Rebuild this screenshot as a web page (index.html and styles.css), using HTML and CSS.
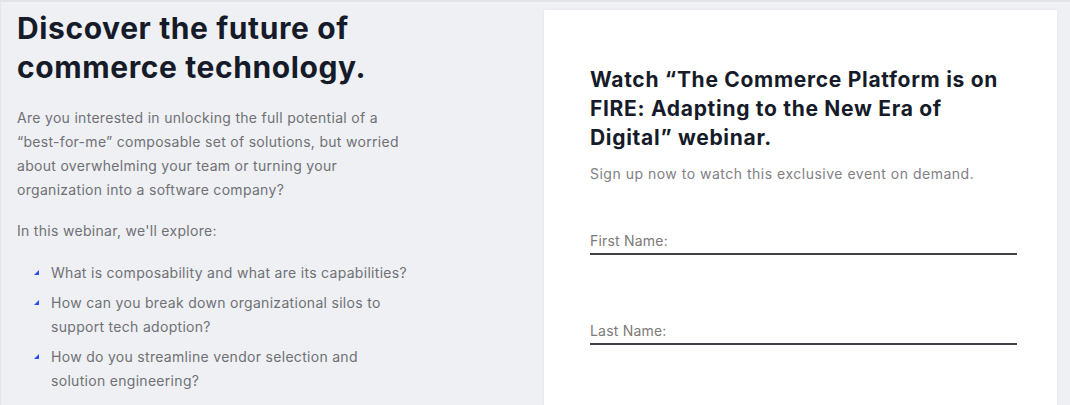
FILE: index.html
```html
<!DOCTYPE html>
<html lang="en">
<head>
    <meta charset="UTF-8">
    <meta name="viewport" content="width=device-width, initial-scale=1.0">
    <title>Commerce Platform Webinar</title>
    <link rel="stylesheet" href="styles.css">
</head>
<body>
    <div class="page">
        <div class="intro">
            <h1>Discover the future of commerce technology.</h1>
            <p>Are you interested in unlocking the full potential of a “best-for-me” composable set of solutions, but worried about overwhelming your team or turning your organization into a software company?</p>
            <p>In this webinar, we'll explore:</p>
            <ul class="topics">
                <li>What is composability and what are its capabilities?</li>
                <li>How can you break down organizational silos to support tech adoption?</li>
                <li>How do you streamline vendor selection and solution engineering?</li>
            </ul>
        </div>
        <div class="signup">
            <h2>Watch “The Commerce Platform is on FIRE: Adapting to the New Era of Digital” webinar.</h2>
            <p class="lead">Sign up now to watch this exclusive event on demand.</p>
            <form class="form">
                <label class="field">
                    <span>First Name:</span>
                    <input type="text" name="first-name">
                </label>
                <label class="field">
                    <span>Last Name:</span>
                    <input type="text" name="last-name">
                </label>
            </form>
        </div>
    </div>
</body>
</html>
```

FILE: styles.css
```css
body {
    font-family: Inter, 'Noto Sans', sans-serif;
    background: #eef0f4;
    margin: 0;
    padding: 0;
    border-top: 2px solid #e2e4e8;
    height: 403px;
    overflow: hidden;
}
.page {
    display: flex;
    align-items: flex-start;
    border-left: 1px solid #e3e5e9;
    height: 100%;
}
.intro {
    width: 510px;
    padding-left: 16px;
}
h1 {
    font-size: 30px;
    font-weight: 700;
    line-height: 39px;
    color: #161b29;
    margin: 7px 0 19px 0;
    letter-spacing: 0.6px;
    width: 400px;
}
.intro p {
    font-size: 14px;
    line-height: 24px;
    color: #707075;
    margin: 0 0 17px 0;
    width: 395px;
    letter-spacing: 0.3px;
}
.topics {
    list-style: none;
    padding: 0 0 0 34px;
    margin: 0;
    padding-top: 1px;
}
.topics li {
    position: relative;
    font-size: 14px;
    line-height: 24px;
    color: #707075;
    margin-bottom: 6px;
    width: 358px;
    letter-spacing: 0.3px;
}
.topics li::before {
    content: '';
    position: absolute;
    left: -17px;
    top: 9px;
    width: 0;
    height: 0;
    border-left: 5px solid transparent;
    border-bottom: 5px solid #2b4cf2;
}
.signup {
    background: #fff;
    margin-top: 8px;
    margin-left: 17px;
    width: 513px;
    height: 400px;
    box-sizing: border-box;
    padding: 55px 41px 0 46px;
    box-shadow: 0 0 3px rgba(0,0,0,0.06);
}
h2 {
    font-size: 21px;
    font-weight: 700;
    line-height: 29px;
    color: #161b29;
    margin: 0 0 13px 0;
    letter-spacing: 0.7px;
}
.lead {
    font-size: 14px;
    color: #808085;
    margin: 0 0 49px 0;
    letter-spacing: 0.5px;
}
.form {
    display: flex;
    flex-direction: column;
    gap: 66px;
}
.field {
    display: flex;
    flex-direction: column;
    border-bottom: 2px solid #404046;
    width: 427px;
}
.field span {
    font-size: 14px;
    color: #7d7a78;
    line-height: 20px;
    letter-spacing: 0.2px;
}
.field input {
    border: none;
    outline: none;
    height: 2px;
    padding: 0;
    background: transparent;
}
```
